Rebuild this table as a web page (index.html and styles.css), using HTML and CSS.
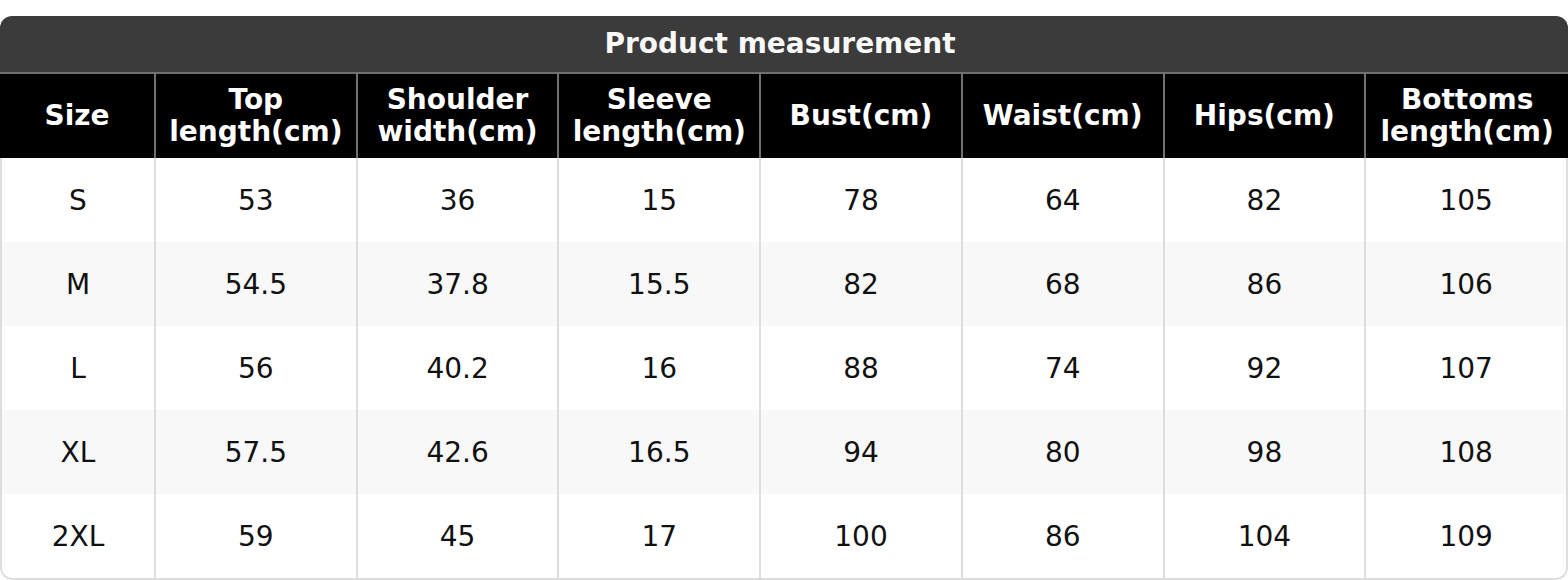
FILE: index.html
```html
<!DOCTYPE html>
<html lang="en">
<head>
<meta charset="utf-8">
<title>Product measurement</title>
<link rel="stylesheet" href="styles.css">
</head>
<body>
<div class="chart">
  <div class="title">Product measurement</div>
  <div class="row head">
    <div class="cell">Size</div>
    <div class="cell">Top<br>length(cm)</div>
    <div class="cell">Shoulder<br>width(cm)</div>
    <div class="cell">Sleeve<br>length(cm)</div>
    <div class="cell">Bust(cm)</div>
    <div class="cell">Waist(cm)</div>
    <div class="cell">Hips(cm)</div>
    <div class="cell">Bottoms<br>length(cm)</div>
  </div>
  <div class="body">
    <div class="row">
      <div class="cell">S</div><div class="cell">53</div><div class="cell">36</div><div class="cell">15</div><div class="cell">78</div><div class="cell">64</div><div class="cell">82</div><div class="cell">105</div>
    </div>
    <div class="row alt">
      <div class="cell">M</div><div class="cell">54.5</div><div class="cell">37.8</div><div class="cell">15.5</div><div class="cell">82</div><div class="cell">68</div><div class="cell">86</div><div class="cell">106</div>
    </div>
    <div class="row">
      <div class="cell">L</div><div class="cell">56</div><div class="cell">40.2</div><div class="cell">16</div><div class="cell">88</div><div class="cell">74</div><div class="cell">92</div><div class="cell">107</div>
    </div>
    <div class="row alt">
      <div class="cell">XL</div><div class="cell">57.5</div><div class="cell">42.6</div><div class="cell">16.5</div><div class="cell">94</div><div class="cell">80</div><div class="cell">98</div><div class="cell">108</div>
    </div>
    <div class="row">
      <div class="cell">2XL</div><div class="cell">59</div><div class="cell">45</div><div class="cell">17</div><div class="cell">100</div><div class="cell">86</div><div class="cell">104</div><div class="cell">109</div>
    </div>
  </div>
</div>
</body>
</html>
```

FILE: styles.css
```css
* { box-sizing: border-box; }

html, body {
  margin: 0;
  padding: 0;
  background: #ffffff;
}

body {
  padding-top: 16px;
  font-family: "DejaVu Sans", "Liberation Sans", sans-serif;
  font-size: 28px;
}

.chart {
  width: 1568px;
  border-radius: 12px;
  overflow: hidden;
}

.title {
  height: 58px;
  padding-right: 8px;
  background: #3b3b3b;
  color: #f8f8f8;
  font-weight: bold;
  text-align: center;
  line-height: 56px;
  border-bottom: 2px solid #707070;
}

.row {
  display: grid;
  grid-template-columns: 152px repeat(7, 1fr);
  height: 84px;
}

.cell {
  display: flex;
  align-items: center;
  justify-content: center;
  text-align: center;
}

.row .cell + .cell {
  border-left: 2px solid #dddddd;
}

.head {
  grid-template-columns: 154px repeat(6, 201.714px) 1fr;
  background: #000000;
  color: #ffffff;
  font-weight: bold;
  line-height: 32px;
}

.head .cell + .cell {
  border-left: 2px solid #707070;
}

.body {
  border: 2px solid #dddddd;
  border-top: none;
  border-radius: 0 0 12px 12px;
  overflow: hidden;
  color: #111111;
}

.alt {
  background: #f8f8f8;
}
```
